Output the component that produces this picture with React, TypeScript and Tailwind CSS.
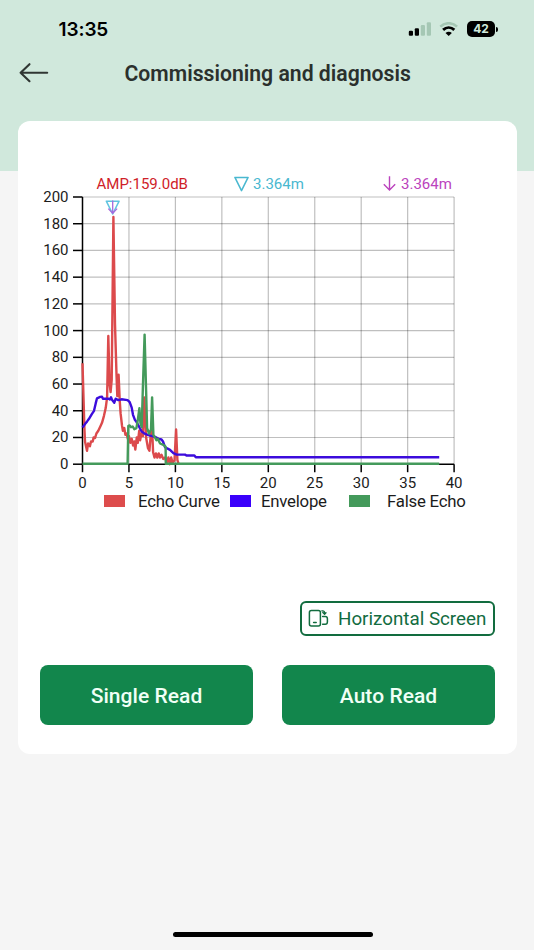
type Point = [number, number];

const echoCurve: Point[] = [
  [0, 75.5], [0.2, 27], [0.27, 17], [0.48, 10], [0.6, 15.5], [0.8, 13.5], [0.92, 17], [1.1, 17], [1.2, 20], [1.35, 19.5],
  [1.5, 23], [1.7, 25], [1.9, 28], [2.1, 31], [2.3, 36], [2.5, 42], [2.65, 50], [2.78, 96], [2.92, 60], [3.02, 54],
  [3.14, 63], [3.33, 185], [3.5, 105], [3.66, 67], [3.75, 51], [3.89, 67], [4, 48], [4.1, 38], [4.25, 29],
  [4.35, 25], [4.5, 27], [4.62, 22], [4.75, 23], [4.88, 19], [5, 21], [5.15, 16], [5.3, 19], [5.45, 14], [5.58, 17],
  [5.68, 11], [5.85, 20], [5.95, 16], [6.1, 25], [6.2, 18], [6.35, 23], [6.5, 21], [6.65, 50], [6.85, 20], [7.05, 12],
  [7.2, 10], [7.4, 26], [7.5, 25], [7.6, 9], [7.75, 5], [7.9, 8], [8.05, 5], [8.2, 8], [8.35, 5], [8.5, 7],
  [8.7, 4], [8.9, 5], [9.05, 1], [9.25, 5], [9.4, 0], [9.55, 5], [9.7, 1], [9.9, 3], [10.07, 26], [10.22, 3], [10.35, 0],
];

const envelope: Point[] = [
  [0, 27.5], [0.27, 30], [0.5, 32], [0.7, 34], [1, 37.5], [1.24, 40], [1.42, 45.5], [1.56, 49.3], [1.9, 50.4], [2.1, 50.6],
  [2.2, 49], [2.8, 49], [2.95, 48.4], [3.07, 50.1], [3.2, 48], [3.42, 46], [3.57, 49], [3.86, 48], [4.2, 48.6], [4.86, 48],
  [5.08, 46.4], [5.3, 42.4], [5.44, 37], [5.65, 33], [5.8, 31.7], [6.1, 28], [6.37, 24.5], [6.73, 22.7], [7.27, 21.4], [7.8, 20.4],
  [8.2, 19], [8.5, 18.5], [8.66, 17], [8.88, 12.7], [9.42, 10.7], [9.78, 8.2], [10.14, 7.2], [11.03, 7.2], [11.2, 6.5], [12.04, 6.5],
  [12.2, 5.2], [38.4, 5.2],
];

const falseEcho: Point[] = [
  [0, 0.3], [4.86, 0.3], [4.93, 28.7], [5.08, 29], [5.22, 27.7], [5.4, 28.2], [5.58, 26.2], [5.8, 27], [5.95, 33], [6.12, 42],
  [6.23, 31], [6.37, 27.7], [6.5, 58], [6.68, 97], [6.84, 58], [6.95, 27], [7.16, 23], [7.37, 26], [7.49, 50], [7.63, 22],
  [7.8, 20], [7.95, 18], [8.1, 19], [8.35, 15.5], [8.7, 14.5], [8.95, 13.2], [8.97, 0.3], [38.4, 0.3],
];

const xTicks = [0, 5, 10, 15, 20, 25, 30, 35, 40];
const yTicks = [0, 20, 40, 60, 80, 100, 120, 140, 160, 180, 200];

const legend = [
  { label: 'Echo Curve', swatch: 'bg-[#dd4c4c]', box: 'ml-[86px] w-[126px] gap-[13px]' },
  { label: 'Envelope', swatch: 'bg-[#3a00fb]', box: 'w-[119px] gap-[10px]' },
  { label: 'False Echo', swatch: 'bg-[#449a5b]', box: 'w-[120px] gap-[17px]' },
];

// Plot area inside the svg
const px = (v: number) => 46.5 + v * 9.29;
const py = (v: number) => 283.2 - v * 1.336;
const toPoints = (data: Point[]) => data.map(([x, y]) => `${px(x).toFixed(1)},${py(y).toFixed(1)}`).join(' ');

function StatusBar() {
  return (
    <div className="flex h-[58px] items-center justify-between pl-[58.5px] pr-[36px] pt-px text-black">
      <span className="font-[Inter] text-[19px] font-semibold leading-none tracking-[-0.1px]">13:35</span>
      <div className="flex items-center gap-2">
        <svg width="23" height="15" viewBox="0 0 23 15">
          <rect x="0.8" y="8.8" width="4.2" height="5" rx="1.1" />
          <rect x="6.8" y="6.2" width="4.2" height="7.6" rx="1.1" />
          <rect x="12.8" y="3.1" width="4.2" height="10.7" rx="1.1" fill="#a5c7b4" />
          <rect x="18.8" y="0.2" width="4.2" height="13.6" rx="1.1" fill="#a5c7b4" />
        </svg>
        <svg width="20" height="15" viewBox="0 0 20 15" fill="none">
          <path d="M1.3 4.6C6.1.1 13.3.1 18.1 4.6" stroke="#a5c7b4" strokeWidth="2.6" />
          <path d="M4.1 7.9c3.3-3 7.9-3 11.2 0" stroke="#000" strokeWidth="2.9" />
          <path d="M9.7 14.1 6.5 10.9c1.9-1.7 4.5-1.7 6.4 0z" fill="#000" />
        </svg>
        <div className="-mt-px flex items-center gap-px">
          <span className="flex h-[16px] w-[28px] items-center justify-center rounded-[5px] bg-black font-[Inter] text-[12px] font-bold leading-none text-[#d0eadd]">
            42
          </span>
          <span className="h-[5px] w-[2px] rounded-r-full bg-black" />
        </div>
      </div>
    </div>
  );
}

function EchoChart() {
  return (
    <svg className="-mt-[11px] block" width="440" height="312" viewBox="0 0 440 312" fill="none">
      <g stroke="#000" strokeOpacity="0.25" strokeWidth="1.2">
        {yTicks.slice(1).map((t) => (
          <line key={t} x1={px(0)} x2={px(40)} y1={py(t)} y2={py(t)} />
        ))}
        {xTicks.slice(1).map((t) => (
          <line key={t} x1={px(t)} x2={px(t)} y1={py(200)} y2={py(0)} />
        ))}
      </g>
      <g stroke="#000" strokeWidth="1.5">
        <path d={`M${px(0)} ${py(200)}V${py(0)}H${px(40)}`} />
        {yTicks.map((t) => (
          <line key={t} x1={px(0) - 9.5} x2={px(0)} y1={py(t)} y2={py(t)} />
        ))}
        {xTicks.map((t) => (
          <line key={t} x1={px(t)} x2={px(t)} y1={py(0)} y2={py(0) + 8} />
        ))}
      </g>
      <g fill="#1c1c1c" fontSize="15">
        {yTicks.map((t) => (
          <text key={t} x="32.5" y={py(t) + 5} textAnchor="end">{t}</text>
        ))}
        {xTicks.map((t) => (
          <text key={t} x={px(t)} y="307" textAnchor="middle">{t}</text>
        ))}
      </g>
      <g strokeWidth="2.4" strokeLinejoin="round">
        <polyline points={toPoints(echoCurve)} stroke="#dc4a4c" />
        <polyline points={toPoints(envelope)} stroke="#3c0cdc" />
        <polyline points={toPoints(falseEcho)} stroke="#449a5b" />
      </g>
      {/* Echo marker */}
      <path d="M70.3 20.2h12.8L76.7 33z" stroke="#5fc4e0" strokeWidth="1.5" strokeLinejoin="round" />
      <path d="M76.7 19.6v12.8M72.3 27.6l4.4 4.8 4.4-4.8" stroke="#a868dd" strokeWidth="1.3" />
    </svg>
  );
}

function RotateIcon() {
  return (
    <svg width="21" height="19" viewBox="0 0 21 19" fill="none" stroke="#126c3f" strokeWidth="1.5" strokeLinecap="round" strokeLinejoin="round">
      <rect x="1.4" y="1.5" width="11" height="15.4" rx="2" />
      <path d="M5.6 13.4h2.6" />
      <path d="M14.6 7.6h2.6c1.4 0 2.2.8 2.2 2.2V13c0 1.5-.8 2.3-2.2 2.3h-2.6" />
      <path d="M13.8 1.8h.9c1.2 0 1.9.7 1.9 1.9V5M14.8 3.5l1.8 1.7 1.4-1.5" strokeWidth="1.3" />
    </svg>
  );
}

export default function App() {
  return (
    <div className="flex h-[950px] w-[534px] flex-col bg-[linear-gradient(#d0e8dc_171px,#f5f5f5_171px)] font-[Roboto,sans-serif]">
      <StatusBar />

      <header className="flex h-[63px] items-start pl-[19px] pt-[1px]">
        <svg width="30" height="28" viewBox="0 0 30 28" fill="none" stroke="#303633" strokeWidth="2.1" strokeLinecap="round" strokeLinejoin="round">
          <path d="M28.2 13.7H1.6M10.5 5.2l-8.9 8.5 8.9 8.5" />
        </svg>
        <h1 className="ml-[75.5px] whitespace-nowrap text-[21.2px] font-semibold leading-[30px] text-[#2b302d]">
          Commissioning and diagnosis
        </h1>
      </header>

      <main className="ml-[18px] mr-[17px] flex h-[633px] flex-col rounded-[12px] bg-white pt-[55px]">
        <div className="flex h-[16px] items-center whitespace-nowrap text-[15px] leading-[16px]">
          <span className="ml-[78.5px] w-[137.5px] text-[#cf2128]">AMP:159.0dB</span>
          <span className="flex w-[149px] items-center gap-1 text-[#49b8d0]">
            <svg width="15" height="16" viewBox="0 0 15 16" fill="none" stroke="currentColor" strokeWidth="1.5" strokeLinejoin="round">
              <path d="M.9 1.4h13.2L7.5 14.6z" />
            </svg>
            3.364m
          </span>
          <span className="flex items-center gap-[5px] text-[#bb43bd]">
            <svg width="13" height="16" viewBox="0 0 13 16" fill="none" stroke="currentColor" strokeWidth="1.4">
              <path d="M6.5.3V14M.8 8.3 6.5 14l5.7-5.7" />
            </svg>
            3.364m
          </span>
        </div>

        <div className="ml-[18px]">
          <EchoChart />
        </div>

        <div className="flex h-5 items-center whitespace-nowrap text-[16.8px] leading-5 tracking-[-0.24px] text-[#1c1c1c]">
          {legend.map((item) => (
            <div key={item.label} className={`-mt-[5px] flex items-center ${item.box}`}>
              <span className={`h-[12px] w-[21px] shrink-0 ${item.swatch}`} />
              <span>{item.label}</span>
            </div>
          ))}
        </div>

        <div className="mt-[88px] flex justify-end pr-[22px]">
          <button className="flex h-[35px] w-[195px] items-center whitespace-nowrap rounded-[6px] border-2 border-[#126c3f] pl-[6px] text-[18.8px] text-[#126c3f]">
            <RotateIcon />
            <span className="ml-[9px] pt-[2px]">Horizontal Screen</span>
          </button>
        </div>

        <div className="mt-[29px] flex gap-[29px] px-[22px] text-[21px] font-medium text-[#f0fff6]">
          <button className="h-[60px] flex-1 rounded-[8px] bg-[#12864c] pt-[4px] tracking-[0.05px]">Single Read</button>
          <button className="h-[60px] flex-1 rounded-[8px] bg-[#12864c] pt-[4px] tracking-[0.05px]">Auto Read</button>
        </div>
      </main>

      <div className="mb-[13px] ml-[173px] mt-auto h-[5px] w-[200px] rounded-full bg-black" />
    </div>
  );
}
